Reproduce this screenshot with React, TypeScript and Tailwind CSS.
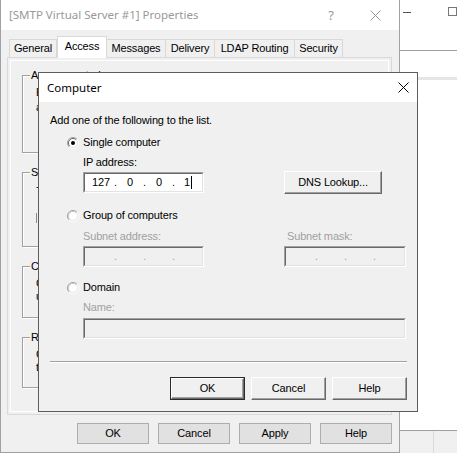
import type { ReactNode } from 'react'

const ui = "font-['Liberation_Sans',Arial,sans-serif] text-[11px] leading-[13px] tracking-[-0.15px] text-black"
const title = "font-['Noto_Sans','Open_Sans',sans-serif] text-[11.5px] leading-[16px] tracking-normal"

function Radio({ checked }: { checked?: boolean }) {
  return (
    <svg width="12" height="12" viewBox="0 0 12 12" className="shrink-0">
      <circle cx="6" cy="6" r="5" fill="#fff" />
      <path d="M2.1 9.9 A5.5 5.5 0 0 1 9.9 2.1" fill="none" stroke="#a0a0a0" />
      <path d="M2.8 9.2 A4.5 4.5 0 0 1 9.2 2.8" fill="none" stroke={checked ? '#696969' : '#c8c8c8'} />
      <path d="M9.9 2.1 A5.5 5.5 0 0 1 2.1 9.9" fill="none" stroke="#fff" />
      <path d="M9.2 2.8 A4.5 4.5 0 0 1 2.8 9.2" fill="none" stroke="#e3e3e3" />
      {checked && <circle cx="6" cy="6" r="2" fill="#000" />}
    </svg>
  )
}

function Sunken({ className, disabled, children }: { className: string; disabled?: boolean; children?: ReactNode }) {
  return (
    <div className={`border border-t-[#a0a0a0] border-l-[#a0a0a0] border-r-white border-b-white ${className}`}>
      <div
        className={`h-full border border-t-[#696969] border-l-[#696969] border-r-[#e3e3e3] border-b-[#e3e3e3] ${
          disabled ? 'bg-[#f0f0f0]' : 'bg-white'
        }`}
      >
        {children}
      </div>
    </div>
  )
}

function IpFields({ values, disabled }: { values: string[]; disabled?: boolean }) {
  return (
    <div className={`flex h-full items-center pl-[4px] ${disabled ? 'text-[#a0a0a0]' : 'text-black'}`}>
      {values.map((v, i) => (
        <div key={i} className="flex items-center">
          <span className="w-[24px] text-center">
            {v}
            {i === 3 && !disabled && <span className="ml-[1px] inline-block h-[13px] w-px bg-black align-middle" />}
          </span>
          {i < 3 && <span className="w-[5px] text-center">.</span>}
        </div>
      ))}
    </div>
  )
}

function ClassicBtn({ children, className, isDefault }: { children: ReactNode; className: string; isDefault?: boolean }) {
  return (
    <div className={`${isDefault ? 'border border-[#2b2b2b]' : ''} ${className}`}>
      <div className="flex h-full w-full items-center justify-center border border-t-white border-l-white border-r-[#696969] border-b-[#696969] bg-[#f0f0f0] shadow-[inset_-1px_-1px_0_#a0a0a0]">
        {children}
      </div>
    </div>
  )
}

// group boxes of the Access page, mostly hidden by the dialog
function GroupBox({ label, h, lines }: { label: string; h: string; lines: ReactNode }) {
  return (
    <div className={`relative w-[355px] border border-[#a0a0a0] shadow-[inset_1px_1px_0_#fff,1px_1px_0_#fff] ${h}`}>
      <span className="absolute -top-[7px] left-[7px] whitespace-nowrap bg-[#f0f0f0] px-[1px]">{label}</span>
      <div className="flex flex-col whitespace-nowrap pl-[13px]">{lines}</div>
    </div>
  )
}

const tabs = [
  { label: 'General', w: 'w-[48px]' },
  { label: 'Access', w: 'w-[50px]', active: true },
  { label: 'Messages', w: 'w-[59px]' },
  { label: 'Delivery', w: 'w-[49px]' },
  { label: 'LDAP Routing', w: 'w-[80px]' },
  { label: 'Security', w: 'w-[48px]' },
]

export default function App() {
  return (
    <div className={`relative h-[455px] w-[457px] overflow-hidden bg-white ${ui}`}>
      {/* window behind, on the right */}
      <div className="absolute left-[400px] top-0 flex h-[453px] w-[57px] flex-col bg-white">
        <div className="flex h-[50px] items-start justify-between pl-[3px] pt-[7px]">
          <div className="mt-[5px] h-px w-[8px] bg-[#555]" />
          <div className="h-[9px] w-[9px] border border-[#777]" />
        </div>
        <div className="h-px bg-[#a0a0a0]" />
        <div className="mt-[26px] h-[3px] bg-[#e6e6e6]" />
        <div className="flex-1" />
        <div className="flex h-[23px] border-t border-[#a0a0a0] bg-[#f0f0f0]">
          <div className="w-[34px] border-r border-[#d9d9d9]" />
        </div>
      </div>

      {/* properties window */}
      <div className="absolute left-0 top-0 flex h-[453px] w-[400px] flex-col border-x border-b border-x-[#a0a0a0] border-b-[#a0a0a0] bg-[#f0f0f0]">
        <div className="flex h-[30px] items-center bg-white pl-[8px] text-[#999]">
          <span className={title}>[SMTP Virtual Server #1] Properties</span>
          <span className={`${title} ml-auto mr-[36px] text-[13px]`}>?</span>
          <svg width="11" height="11" viewBox="0 0 11 11" className="mr-[18px]">
            <path d="M0.5 0.5 L10.5 10.5 M10.5 0.5 L0.5 10.5" stroke="#999" strokeWidth="1" />
          </svg>
        </div>

        <div className="mt-[6px] flex h-[21px] items-end pl-[8px]">
          {tabs.map((t) =>
            t.active ? (
              <div
                key={t.label}
                className={`relative z-10 -mb-px flex h-[22px] items-start justify-center border border-b-0 border-[#d9d9d9] bg-white pt-[3px] ${t.w}`}
              >
                {t.label}
              </div>
            ) : (
              <div
                key={t.label}
                className={`flex h-[18px] items-center justify-center border border-b-0 border-l-0 border-[#d9d9d9] bg-[#f0f0f0] first:border-l ${t.w}`}
              >
                {t.label}
              </div>
            )
          )}
        </div>

        <div className="ml-[6px] h-[358px] w-[385px] border border-[#d9d9d9] bg-[#f0f0f0] p-[2px]">
          <div className="flex h-full flex-col gap-[19px] border border-white pl-[11px] pt-[14px]">
            <GroupBox
              label="Access control"
              h="h-[78px]"
              lines={
                <>
                  <span className="mt-[10px]">Enable anonymous access and edit the</span>
                  <span className="mt-[2px]">authentication methods for this resource.</span>
                </>
              }
            />
            <GroupBox
              label="Secure communication"
              h="h-[75px]"
              lines={
                <>
                  <span className="mt-[7px]">- View or set the secure communications</span>
                  <span className="mt-[20px] h-[10px] w-[60px] border-l border-[#8a8a8a]" />
                </>
              }
            />
            <GroupBox
              label="Connection control"
              h="h-[52px]"
              lines={
                <>
                  <span className="mt-[10px]">Grant or deny access to this resource</span>
                  <span>using IP addresses or Internet domain names.</span>
                </>
              }
            />
            <GroupBox
              label="Relay restrictions"
              h="h-[51px]"
              lines={
                <>
                  <span className="mt-[10px]">Grant or deny permissions to relay e-mail</span>
                  <span>through this SMTP virtual server.</span>
                </>
              }
            />
          </div>
        </div>

        <div className="mt-[8px] flex justify-end gap-[9px] pr-[7px]">
          {['OK', 'Cancel', 'Apply', 'Help'].map((b) => (
            <div key={b} className="flex h-[21px] w-[72px] items-center justify-center border border-[#adadad] bg-[#e1e1e1]">
              {b}
            </div>
          ))}
        </div>
      </div>

      {/* Computer dialog */}
      <div className="absolute left-[38px] top-[72px] z-20 flex h-[340px] w-[380px] flex-col border border-[#5c5c5c] bg-[#f0f0f0]">
        <div className="flex h-[29px] items-center justify-between bg-white pl-[8px] pr-[8px]">
          <span className={`${title} text-black`}>Computer</span>
          <svg width="11" height="11" viewBox="0 0 11 11">
            <path d="M0.5 0.5 L10.5 10.5 M10.5 0.5 L0.5 10.5" stroke="#000" strokeWidth="1" />
          </svg>
        </div>

        <div className="flex flex-col pl-[11px] pr-[10px] pt-[12px]">
          <span>Add one of the following to the list.</span>

          <div className="ml-[17px] mt-[9px] flex h-[13px] items-center gap-[4px]">
            <Radio checked />
            <span>Single computer</span>
          </div>
          <div className="flex flex-col pl-[33px]">
            <span className="mt-[7px]">IP address:</span>
            <div className="mt-[2px] flex items-center">
              <Sunken className="h-[21px] w-[121px]">
                <IpFields values={['127', '0', '0', '1']} />
              </Sunken>
              <ClassicBtn className="ml-[80px] h-[23px] w-[98px]">DNS Lookup...</ClassicBtn>
            </div>
          </div>

          <div className="ml-[17px] mt-[15px] flex h-[13px] items-center gap-[4px]">
            <Radio />
            <span>Group of computers</span>
          </div>
          <div className="mt-[8px] flex pl-[33px] text-[#a0a0a0]">
            <div className="flex w-[201px] flex-col">
              <span>Subnet address:</span>
              <Sunken disabled className="mt-[3px] h-[21px] w-[121px]">
                <IpFields disabled values={['', '', '', '']} />
              </Sunken>
            </div>
            <div className="flex flex-col">
              <span className="pl-[3px]">Subnet mask:</span>
              <Sunken disabled className="mt-[3px] h-[21px] w-[122px]">
                <IpFields disabled values={['', '', '', '']} />
              </Sunken>
            </div>
          </div>

          <div className="ml-[17px] mt-[14px] flex h-[13px] items-center gap-[4px]">
            <Radio />
            <span>Domain</span>
          </div>
          <div className="flex flex-col pl-[33px] text-[#a0a0a0]">
            <span className="mt-[7px]">Name:</span>
            <Sunken disabled className="mt-[4px] h-[21px] w-[323px]" />
          </div>

          <div className="mt-[22px] h-[2px] border-t border-b border-t-[#a0a0a0] border-b-white" />

          <div className="mt-[14px] flex justify-end gap-[6px]">
            <ClassicBtn isDefault className="h-[23px] w-[75px]">
              OK
            </ClassicBtn>
            <ClassicBtn className="h-[23px] w-[75px]">Cancel</ClassicBtn>
            <ClassicBtn className="h-[23px] w-[75px]">Help</ClassicBtn>
          </div>
        </div>
      </div>
    </div>
  )
}
